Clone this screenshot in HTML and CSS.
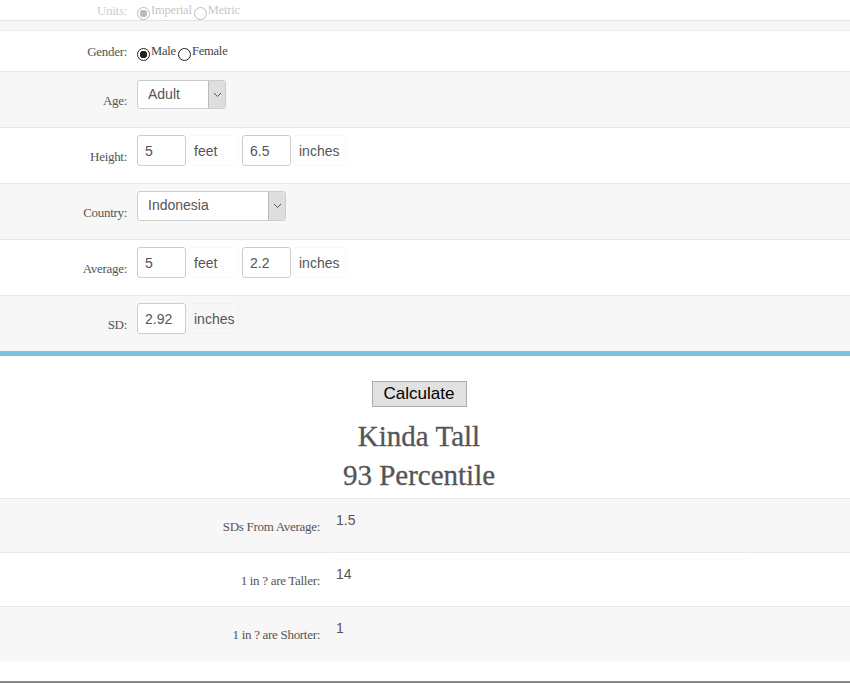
FILE: index.html
```html
<!DOCTYPE html>
<html lang="en">

<head>
    <meta charset="UTF-8">
    <meta name="viewport" content="width=device-width, initial-scale=1.0">
    <title>Height Percentile Calculator</title>
    <link rel="stylesheet" href="styles.css">
</head>

<body>
    <div class="page">
        <!-- Units (faded header) -->
        <div class="units">
            <div class="label">Units:</div>
            <div class="radios">
                <input type="radio" name="units" checked><span>Imperial</span>
                <input type="radio" name="units"><span>Metric</span>
            </div>
        </div>
        <div class="spacer"></div>

        <!-- Inputs -->
        <div class="row short">
            <div class="label">Gender:</div>
            <div class="radios">
                <input type="radio" name="gender" checked><span>Male</span>
                <input type="radio" name="gender"><span>Female</span>
            </div>
        </div>

        <div class="row alt">
            <div class="label">Age:</div>
            <div class="field">
                <div class="select age">
                    <span class="value">Adult</span>
                    <span class="arrow"><svg width="9" height="6" viewBox="0 0 9 6"><path d="M1 1l3.5 3.5L8 1" fill="none" stroke="#555" stroke-width="1"/></svg></span>
                </div>
            </div>
        </div>

        <div class="row">
            <div class="label">Height:</div>
            <div class="field">
                <input class="num" type="text" value="5">
                <span class="addon">feet</span>
                <input class="num" type="text" value="6.5">
                <span class="addon">inches</span>
            </div>
        </div>

        <div class="row alt">
            <div class="label">Country:</div>
            <div class="field">
                <div class="select country">
                    <span class="value">Indonesia</span>
                    <span class="arrow"><svg width="9" height="6" viewBox="0 0 9 6"><path d="M1 1l3.5 3.5L8 1" fill="none" stroke="#555" stroke-width="1"/></svg></span>
                </div>
            </div>
        </div>

        <div class="row">
            <div class="label">Average:</div>
            <div class="field">
                <input class="num" type="text" value="5">
                <span class="addon">feet</span>
                <input class="num" type="text" value="2.2">
                <span class="addon">inches</span>
            </div>
        </div>

        <div class="row alt last">
            <div class="label">SD:</div>
            <div class="field">
                <input class="num" type="text" value="2.92">
                <span class="addon">inches</span>
            </div>
        </div>

        <!-- Results -->
        <div class="summary">
            <button class="calc">Calculate</button>
            <div class="verdict">Kinda Tall</div>
            <div class="verdict">93 Percentile</div>
        </div>

        <div class="results">
            <div class="result alt">
                <div class="label">SDs From Average:</div>
                <div class="output">1.5</div>
            </div>
            <div class="result">
                <div class="label">1 in ? are Taller:</div>
                <div class="output">14</div>
            </div>
            <div class="result alt">
                <div class="label">1 in ? are Shorter:</div>
                <div class="output">1</div>
            </div>
        </div>
        <div class="footer"></div>
    </div>
</body>

</html>
```

FILE: styles.css
```css
body {
    margin: 0;
    font-family: "Liberation Sans", Arial, sans-serif;
    background: #fff;
    color: #555;
}

.page {
    width: 850px;
}

.label {
    font-family: "Liberation Serif", "Times New Roman", serif;
    font-size: 13px;
    line-height: 14px;
    color: #555;
    text-align: right;
    letter-spacing: -0.3px;
}

/* faded units bar */
.units {
    display: flex;
    height: 20px;
    border-bottom: 1px solid #e4e4e8;
}

.units .label,
.units .radios {
    opacity: 0.3;
}

.units .label {
    width: 127px;
    padding-top: 4px;
}

.units .radios {
    padding-top: 3px;
}

.spacer {
    height: 9px;
    background: #f7f7f7;
    border-bottom: 1px solid #ececec;
}

/* radios */
.radios {
    display: flex;
    align-items: flex-start;
    margin-left: 10px;
    font-family: "Liberation Serif", "Times New Roman", serif;
    font-size: 12.5px;
    line-height: 14px;
    letter-spacing: -0.2px;
    color: #444;
}

.radios input {
    appearance: none;
    -webkit-appearance: none;
    width: 13px;
    height: 13px;
    margin: 4px 1px 0 0;
    border: 1px solid #222;
    border-radius: 50%;
    box-sizing: border-box;
    background: #fff;
}

.radios input:checked {
    background: radial-gradient(circle, #222 0 3.5px, #fff 4px);
}

.radios span {
    margin-right: 2px;
}

/* input rows */
.row {
    display: flex;
    align-items: flex-start;
    height: 55px;
    border-bottom: 1px solid #e8e8e8;
    background: #fff;
}

.row.alt {
    background: #f7f7f7;
}

.row .label {
    width: 127px;
    padding-top: 22px;
}

.row.short {
    height: 40px;
}

.row.short .label {
    padding-top: 14px;
}

.row.short .radios {
    padding-top: 13px;
}

.row.last {
    border-bottom: 5px solid #7dc1e0;
}

.field {
    display: flex;
    align-items: center;
    margin-left: 10px;
    padding-top: 7px;
}

.num {
    width: 49px;
    height: 31px;
    box-sizing: border-box;
    border: 1px solid #ccc;
    border-radius: 3px;
    padding: 0 0 0 7px;
    font-family: "Liberation Sans", Arial, sans-serif;
    font-size: 14px;
    color: #555;
    background: #fff;
}

.addon {
    display: flex;
    align-items: center;
    height: 31px;
    box-sizing: border-box;
    margin: 0 3px 0 2px;
    padding: 0 5px;
    border: 1px solid rgba(0, 0, 0, 0.025);
    border-radius: 3px;
    font-size: 14px;
    color: #555;
}

.addon:nth-of-type(1) {
    width: 51px;
}

.addon:nth-of-type(2) {
    width: 53px;
}

/* selects */
.select {
    display: flex;
    height: 29px;
    box-sizing: border-box;
    border: 1px solid #ccc;
    border-radius: 3px;
    background: #fff;
    font-size: 14px;
    color: #555;
    overflow: hidden;
}

.select.age {
    width: 89px;
    margin-top: 1px;
}

.select.country {
    width: 149px;
    height: 30px;
}

.select .value {
    flex: 1;
    padding-left: 10px;
    line-height: 27px;
}

.select .arrow {
    width: 16px;
    display: flex;
    align-items: center;
    justify-content: center;
    background: #dedede;
    border-left: 1px solid #bbb;
}

/* summary */
.summary {
    display: flex;
    flex-direction: column;
    align-items: center;
    height: 142px;
    padding-right: 12px;
    border-bottom: 1px solid #e8e8e8;
}

.calc {
    width: 95px;
    height: 26px;
    margin: 25px 0 10px;
    padding: 0;
    border: 1px solid #adadad;
    background: #e1e1e1;
    font-family: "Liberation Sans", Arial, sans-serif;
    font-size: 17px;
    color: #000;
}

.verdict {
    font-family: "Liberation Serif", "Times New Roman", serif;
    font-size: 29px;
    line-height: 39px;
    color: #555;
    -webkit-text-stroke: 0.3px #555;
}

/* result rows */
.result {
    display: flex;
    align-items: flex-start;
    height: 53px;
    border-bottom: 1px solid #e8e8e8;
    background: #fff;
}

.result.alt {
    background: #f7f7f7;
}

.result:last-child {
    border-bottom: none;
    height: 54px;
}

.result .label {
    width: 320px;
    padding-top: 21px;
}

.output {
    width: 422px;
    height: 30px;
    box-sizing: border-box;
    margin: 6px 0 0 9px;
    padding: 6px 6px 0;
    border: 1px solid rgba(0, 0, 0, 0.012);
    border-radius: 4px;
    font-size: 14px;
    line-height: 16px;
    color: #555;
}

.footer {
    height: 20px;
    border-bottom: 2px solid #888;
}
```
